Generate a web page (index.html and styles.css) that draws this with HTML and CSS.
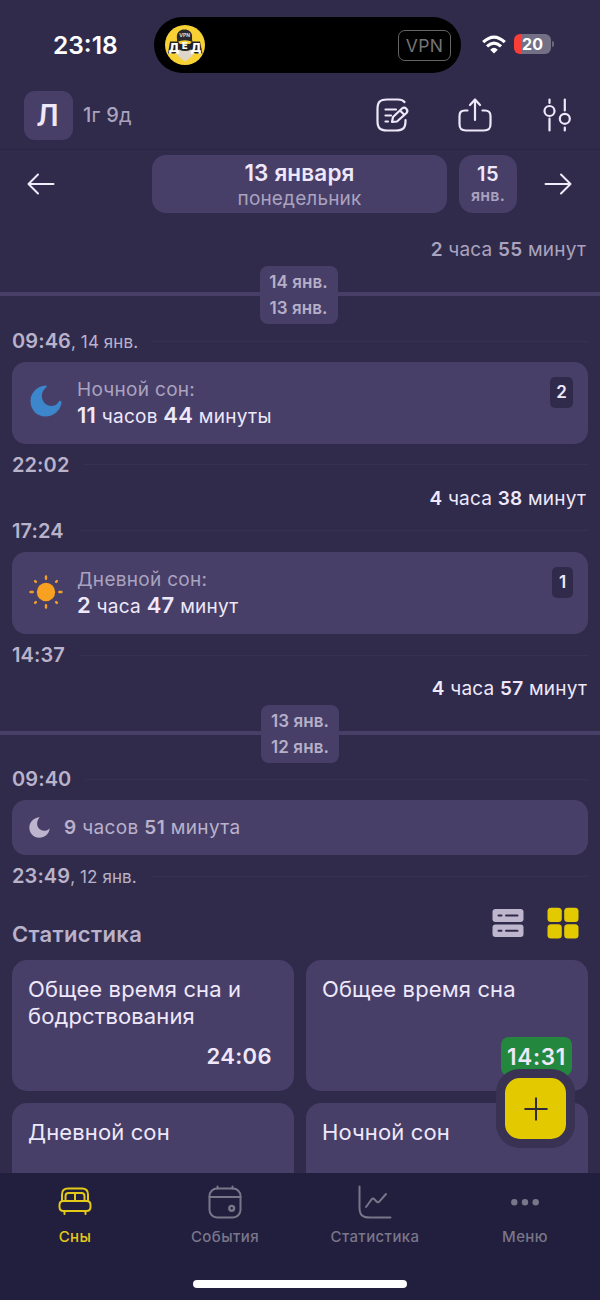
FILE: index.html
```html
<!DOCTYPE html>
<html lang="ru">
<head>
<meta charset="utf-8">
<meta name="viewport" content="width=device-width">
<title>Сны</title>
<link rel="stylesheet" href="styles.css">
</head>
<body>
<div class="app">
  <div class="status">
    <div class="clock">23:18</div>
    <div class="island">
      <svg class="vpn-logo" viewBox="0 0 40 40">
        <circle cx="20" cy="20" r="20" fill="#f8d235"/>
        <path d="M10 24L13 31L20 36.500L27 31L31 24L27 19H13Z" fill="#ddd6c9"/>
        <path d="M3 28.500L5 16.500H13L15 19H25L27 16.500H35L37.500 28.500H30L26 24.500Q20 27.500 14 24.500L10 28.500Z" fill="#222"/>
        <text class="logo-word" x="9" y="26.500" text-anchor="middle">Д</text>
        <text class="logo-word mid" x="19.800" y="23.500" text-anchor="middle">Е</text>
        <text class="logo-word" x="31" y="26.500" text-anchor="middle">Д</text>
        <path d="M12 14C11 7 15 4.500 19.500 4.500S28 7 27 14L27.500 17Q20 13.500 12 17Z" fill="#29292b"/>
        <text class="logo-vpn" x="19.700" y="12.300" text-anchor="middle">VPN</text>
      </svg>
      <span class="vpn-label">VPN</span>
    </div>
    <svg class="wifi" viewBox="0 0 24 19" fill="none" stroke="#fff" stroke-width="3.200">
      <path d="M1.200 7.200Q12 -3 22.800 7.200"/>
      <path d="M5 11.400Q12 5 19 11.400"/>
      <path d="M8.200 14.700Q12 11 15.800 14.700L12 18.500Z" fill="#fff" stroke="none"/>
    </svg>
    <div class="battery"><span>20</span></div>
    <i class="battery-tip"></i>
  </div>

  <header class="header">
    <div class="avatar">Л</div>
    <div class="age"><b>1</b>г <b>9</b>д</div>
    <div class="actions">
      <svg class="icon" viewBox="0 0 34 34">
        <path d="M28.500 4C27 2 25 1.500 22 1.500H11C4 1.500 1.500 4 1.500 11V23C1.500 30 4 32.500 11 32.500H20C27 32.500 29.500 30 29.500 23V22"/>
        <path d="M9.500 11.500H20M9.500 17.500H15M9.500 23.500H12"/>
        <path d="M16 24L17 19L26 10.500C29 8 33 12 30.500 15L21 23.500Z M24 12.500L28.500 17"/>
      </svg>
      <svg class="icon" viewBox="0 0 34 34">
        <path d="M17 22V2M12 7L17 1.500L22 7"/>
        <path d="M9.500 12.500H7C3 12.500 1.500 14 1.500 18V26C1.500 31 3.500 32.500 8 32.500H26C30.500 32.500 32.500 31 32.500 26V18C32.500 14 31 12.500 27 12.500H24.500"/>
      </svg>
      <svg class="icon" viewBox="0 0 34 34">
        <path d="M9.500 1.500V5M9.500 20.500V32.500M24.800 1.500V12.500M24.800 29.500V32.500"/>
        <circle cx="9.500" cy="13" r="5"/><circle cx="24.800" cy="20.800" r="5"/>
      </svg>
    </div>
  </header>

  <nav class="dates">
    <svg class="arrow" viewBox="0 0 28 22"><path d="M1.500 11H26.500M11 1.500L1.500 11L11 20.500"/></svg>
    <div class="day"><strong>13 января</strong><span>понедельник</span></div>
    <div class="next-day"><strong>15</strong><span>янв.</span></div>
    <svg class="arrow" viewBox="0 0 28 22"><path d="M1.500 11H26.500M17 1.500L26.500 11L17 20.500"/></svg>
  </nav>

  <main class="content">
    <div class="awake dim first"><span><b>2</b> часа <b>55</b> минут</span></div>
    <div class="midnight"><div class="pill"><span>14 янв.</span><span>13 янв.</span></div></div>
    <div class="time t1"><span><b>09:46</b><small>, 14 янв.</small></span></div>
    <section class="sleep">
      <svg class="moon" viewBox="0 0 32 32"><path fill="#3c86cb" d="M15.500 .5C7 1 .5 8 .5 16C.5 25 7 31.500 15.500 31.500C23.500 31.500 30 26 31.500 18C31.800 15.500 29.500 15 28.500 17C26 21.500 20 22 15.500 19C11 15 10.500 8 15 3.500C17.500 1.500 17 .5 15.500 .5Z"/></svg>
      <div class="sleep-text"><div class="label">Ночной сон:</div><div class="duration"><b>11</b> часов <b>44</b> минуты</div></div>
      <div class="count">2</div>
    </section>
    <div class="time t2"><span><b>22:02</b></span></div>
    <div class="awake second"><span><b>4</b> часа <b>38</b> минут</span></div>
    <div class="time t3"><span><b>17:24</b></span></div>
    <section class="sleep">
      <svg class="sun" viewBox="-17 -17 34 34" stroke="#f4a026" stroke-width="2.400" stroke-linecap="round"><circle r="9.200" fill="#f8a01f" stroke="none"/><path d="M0 -15.500V-13.300M0 13.300V15.500M-15.500 0H-13.300M13.300 0H15.500M-10.900 -10.900L-10.100 -10.100M10.900 -10.900L10.100 -10.100M-10.900 10.900L-10.100 10.100M10.900 10.900L10.100 10.100"/></svg>
      <div class="sleep-text"><div class="label">Дневной сон:</div><div class="duration"><b>2</b> часа <b>47</b> минут</div></div>
      <div class="count one">1</div>
    </section>
    <div class="time t4"><span><b>14:37</b></span></div>
    <div class="awake third"><span><b>4</b> часа <b>57</b> минут</span></div>
    <div class="midnight later"><div class="pill"><span>13 янв.</span><span>12 янв.</span></div></div>
    <div class="time t5"><span><b>09:40</b></span></div>
    <section class="sleep compact">
      <svg class="moon-small" viewBox="0 0 32 32"><path fill="#bcb5cd" d="M16.500 .5C7 1 .5 8 .5 16C.5 25 7 31.500 15.500 31.500C23.500 31.500 31 26 31.500 17C27 22 20 22 15.500 18C11 13.500 11.500 5.500 16.500 .5Z"/></svg>
      <div class="duration"><b>9</b> часов <b>51</b> минута</div>
    </section>
    <div class="time t6"><span><b>23:49</b><small>, 12 янв.</small></span></div>

    <div class="stats-head">
      <h2>Статистика</h2>
      <svg class="view" viewBox="0 0 32 32"><g fill="#bdb6cd"><rect x=".5" y="2" width="31" height="13" rx="3"/><rect x=".5" y="17.500" width="31" height="12.500" rx="3"/></g><path d="M6.500 8.500H9.500M14 8.500H25.500M6.500 23.700H9.500M14 23.700H25.500" stroke="#302b4b" stroke-width="2" stroke-linecap="round"/></svg>
      <svg class="view" viewBox="0 0 32 32" fill="#e3ca00"><rect x=".5" y=".8" width="14.300" height="14.300" rx="3.500"/><rect x="17.200" y=".8" width="14.300" height="14.300" rx="3.500"/><rect x=".5" y="17.300" width="14.300" height="14.300" rx="3.500"/><rect x="17.200" y="17.300" width="14.300" height="14.300" rx="3.500"/></svg>
    </div>
    <div class="stats">
      <div class="stat"><p>Общее время сна и бодрствования</p><b>24:06</b></div>
      <div class="stat"><p>Общее время сна</p><b class="good">14:31</b></div>
      <div class="stat"><p>Дневной сон</p></div>
      <div class="stat"><p>Ночной сон</p></div>
    </div>
    <button class="add" aria-label="Добавить"><svg viewBox="0 0 24 24"><path d="M12 1.200V22.800M1.200 12H22.800" stroke="#302b38" stroke-width="2" stroke-linecap="round"/></svg></button>
  </main>

  <footer class="tabs">
    <div class="tab-row">
      <div class="tab active"><svg viewBox="0 0 34 34"><path d="M4 16V9.500C4 5.500 6 3.500 10 3.500H24C28 3.500 30 5.500 30 9.500V16M7.500 16V11C7.500 9 8.500 8 10.500 8H23.500C25.500 8 26.500 9 26.500 11V16M17 8V16M5.500 16H28.500C31 16 32.500 17.500 32.500 20V22C32.500 24.500 31 26 28.500 26H5.500C3 26 1.500 24.500 1.500 22V20C1.500 17.500 3 16 5.500 16ZM6.500 26V29M27.500 26V29"/></svg><span>Сны</span></div>
      <div class="tab"><svg viewBox="0 0 34 34"><rect x="1.500" y="3.500" width="31" height="29" rx="7.500"/><path d="M1.500 12H32.500M9.500 1.500V3.500M24.500 1.500V3.500"/><circle cx="23.700" cy="23.300" r="2.400" stroke-width="2.400"/></svg><span>События</span></div>
      <div class="tab"><svg viewBox="0 0 34 34"><path d="M1.500 1.500V22C1.500 30 4 32.500 12 32.500H32.500M8 22L13.500 14.500C14.500 13.300 15.500 13.200 16.500 14.300L18.500 16.500C19.500 17.600 20.500 17.500 21.500 16.300L28 9"/></svg><span>Статистика</span></div>
      <div class="tab"><svg class="dots" viewBox="0 0 34 34"><circle cx="6.300" cy="17.300" r="3.200"/><circle cx="17" cy="17.300" r="3.200"/><circle cx="27.700" cy="17.300" r="3.200"/></svg><span>Меню</span></div>
    </div>
    <div class="home-bar"></div>
  </footer>
</div>
</body>
</html>
```
FILE: styles.css
```css
* { box-sizing: border-box; }
body { margin: 0; background: #302b4b; font-family: Inter, "Open Sans", sans-serif; color: #eee8fa; }
b, strong { font-weight: 600; }
.app { width: 600px; height: 1300px; overflow: hidden; display: flex; flex-direction: column; background: #302b4b; }

.status { height: 86px; flex: none; display: flex; padding-left: 53px; }
.clock { width: 101px; padding-top: 30px; font-size: 24.500px; line-height: 30px; font-weight: 600; color: #fff; }
.island { width: 307px; height: 56px; margin-top: 17px; border-radius: 28px; background: #000; display: flex; justify-content: space-between; padding: 8px 10px 0 11px; }
.vpn-logo { width: 40px; height: 40px; }
.logo-vpn { font-size: 5px; font-weight: 700; fill: #ddd; }
.logo-word { font-size: 11.500px; font-weight: 900; fill: #fff; }
.logo-word.mid { font-size: 9px; }
.vpn-label { width: 53px; height: 31px; margin-top: 5px; border: 1.500px solid #656565; border-radius: 7px; color: #747474; font-size: 17.500px; line-height: 29px; text-align: center; letter-spacing: .4px; }
.wifi { width: 24px; height: 19px; margin: 35px 0 0 21px; }
.battery { width: 37px; height: 20px; margin: 34px 0 0 8px; border-radius: 6px; background: linear-gradient(90deg, #fb3d37 8px, #737086 8px); font-size: 16px; font-weight: 700; line-height: 20px; text-align: center; color: #fff; }
.battery-tip { width: 2px; height: 6px; margin: 41px 0 0 1px; border-radius: 0 3px 3px 0; background: #6c687e; }

.header { height: 64px; flex: none; display: flex; padding: 5px 26px 0 24px; border-bottom: 1px solid #2a2543; }
.avatar { width: 49px; height: 49px; border-radius: 11px; background: #483f69; font-size: 30px; line-height: 49px; font-weight: 600; text-align: center; padding-right: 2px; }
.age { margin-left: 10px; font-size: 20px; line-height: 49px; letter-spacing: .2px; color: #aaa3bf; }
.age b { font-weight: 500; }
.actions { margin-left: auto; display: flex; gap: 48px; padding-top: 7px; }
.icon { width: 34px; height: 34px; fill: none; stroke: #eee8fa; stroke-width: 2.200; stroke-linecap: round; stroke-linejoin: round; }

.dates { height: 63px; flex: none; display: flex; padding: 5px 27px 0; }
.arrow { width: 28px; height: 22px; margin-top: 18px; fill: none; stroke: #f0eafb; stroke-width: 2; stroke-linecap: round; stroke-linejoin: round; }
.day, .next-day { height: 58px; border-radius: 14px; background: #483f69; display: flex; flex-direction: column; align-items: center; }
.day { width: 295px; margin-left: 97px; padding-top: 5px; }
.day strong { font-size: 22.500px; line-height: 26px; letter-spacing: .15px; }
.day span { font-size: 19px; line-height: 25px; letter-spacing: .15px; color: #aaa3bf; }
.next-day { width: 58px; margin: 0 27px 0 12px; padding-top: 8px; }
.next-day strong { font-size: 20px; line-height: 22px; letter-spacing: .4px; }
.next-day span { font-size: 16px; line-height: 21px; font-weight: 600; color: #aaa3bf; letter-spacing: .2px; }

.content { flex: 1; min-height: 0; overflow: hidden; position: relative; }
.awake { display: flex; align-items: center; justify-content: flex-end; padding-right: 14px; font-size: 19px; line-height: 26px; letter-spacing: .22px; }
.dim { color: #aaa3bf; }
.first { height: 53px; padding-top: 21px; }
.second { height: 26px; padding-top: 1px; }
.third { height: 29px; padding-right: 13px; padding-bottom: 4px; }
.midnight { height: 58px; display: grid; justify-items: center; background: linear-gradient(#483f69, #483f69) 0 26px / 100% 4px no-repeat; padding-right: 3px; }
.later { padding-right: 0; }
.pill { width: 78px; height: 58px; border-radius: 8px; background: #483f69; display: flex; flex-direction: column; align-items: center; padding-top: 4px; font-size: 17px; line-height: 25.500px; font-weight: 600; letter-spacing: .1px; color: #b6afc8; }
.time { display: flex; align-items: center; padding: 0 12px; font-size: 20px; line-height: 26px; letter-spacing: .1px; color: #b9b2ca; }
.time::after { content: ""; flex: 1; height: 1px; margin-left: 14px; background: #37314f; }
.time small { font-size: 17px; }
.t1 { height: 38px; padding-bottom: 4px; }
.t2 { height: 41px; }
.t3 { height: 41px; padding-bottom: 2px; }
.t4 { height: 42px; }
.t5 { height: 37px; padding-bottom: 5px; }
.t6 { height: 43px; }
.sleep { height: 82px; margin: 0 12px; padding: 0 15px 0 18px; border-radius: 14px; background: #483f69; display: flex; }
.moon { width: 32px; height: 32px; margin-top: 23px; }
.sun { width: 34px; height: 34px; margin: 23px -2px 0 -1px; }
.sleep-text { margin-left: 15px; padding-top: 15px; }
.sun + .sleep-text { margin-left: 16px; }
.label { font-size: 19px; line-height: 25px; letter-spacing: .3px; color: #aaa3bf; }
.duration { font-size: 19px; line-height: 26px; letter-spacing: .27px; }
.sleep-text b { font-size: 22px; }
.count { width: 23px; height: 31px; margin: 15px 0 0 auto; border-radius: 5px; background: #302b4b; font-size: 17px; font-weight: 600; line-height: 30px; text-align: center; }
.one { width: 21px; }
.compact { height: 55px; padding-left: 17px; align-items: center; color: #b9b2ca; }
.compact .duration { letter-spacing: .36px; }
.moon-small { width: 21px; height: 21px; margin-right: 14px; }

.stats-head { height: 62px; display: flex; padding: 9px 21px 0 12px; }
.stats-head h2 { margin: 0 auto 0 0; padding-top: 13px; font-size: 22px; line-height: 28px; font-weight: 600; letter-spacing: .35px; color: #b9b2ca; }
.view { width: 32px; height: 32px; margin-left: 23px; }
.stats { display: grid; grid-template-columns: 1fr 1fr; grid-auto-rows: 131px; gap: 12px; margin: 0 12px; }
.stat { border-radius: 15px; background: #483f69; padding: 16px 16px 15px; display: flex; flex-direction: column; align-items: flex-end; }
.stat p { margin: 0; align-self: stretch; font-size: 22px; line-height: 27px; letter-spacing: .12px; }
.stat b { margin-top: auto; padding: 0 6px; font-size: 22px; line-height: 39px; letter-spacing: .4px; }
.stat .good { background: #23873e; border-radius: 8px; font-size: 22.500px; letter-spacing: .7px; }
.add { position: absolute; right: 25px; bottom: 25px; width: 79px; height: 79px; padding: 0; border: 9px solid #393253; border-radius: 24px; background: #e3ca00; display: grid; place-items: center; }
.add svg { width: 24px; height: 24px; }

.tabs { height: 127px; flex: none; background: #221e3d; padding-top: 12px; }
.tab-row { display: grid; grid-template-columns: repeat(4, 1fr); height: 95px; }
.tab { display: flex; flex-direction: column; align-items: center; color: #79768a; font-size: 15px; line-height: 20px; font-weight: 500; letter-spacing: .4px; }
.tab svg { width: 34px; height: 34px; margin-bottom: 8px; fill: none; stroke: currentColor; stroke-width: 2; stroke-linecap: round; stroke-linejoin: round; }
.tab .dots { fill: currentColor; stroke: none; }
.tab.active { color: #e3ca18; }
.home-bar { width: 214px; height: 8px; border-radius: 4px; background: #fff; margin: 0 auto; }
```
